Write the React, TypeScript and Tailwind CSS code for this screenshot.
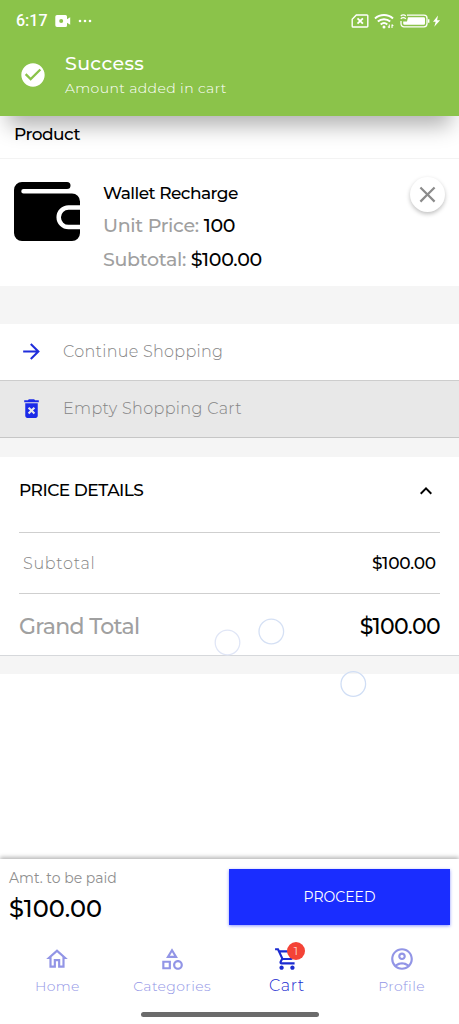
import React from 'react';
import {
  MdArrowForward,
  MdCheckCircle,
  MdClose,
  MdDeleteForever,
  MdKeyboardArrowUp,
  MdOutlineAccountCircle,
  MdOutlineCategory,
  MdOutlineHome,
  MdOutlineShoppingCart,
} from 'react-icons/md';

const tabs = [
  { icon: MdOutlineHome, label: 'Home', text: 'text-[14px] tracking-[0.3px]' },
  { icon: MdOutlineCategory, label: 'Categories', text: 'text-[14px] tracking-[0.4px]' },
  { icon: MdOutlineShoppingCart, label: 'Cart', text: 'text-[16px] tracking-[0.6px]', active: true, badge: 1 },
  { icon: MdOutlineAccountCircle, label: 'Profile', text: 'text-[14px] tracking-[0.4px]' },
];

const StatusBar: React.FC = () => (
  <div className="flex h-[42px] items-center justify-between pl-4 pr-[18px] text-white">
    <div className="flex items-center">
      <span className="font-['Roboto',sans-serif] text-[16px] font-medium leading-5">6:17</span>
      <svg className="ml-[7px]" width="16" height="12" viewBox="0 0 16 12" fill="currentColor">
        <path
          fillRule="evenodd"
          d="M2 0h8.5a1.5 1.5 0 0 1 1.5 1.5v2.7l3.2-2v7.6l-3.2-2v2.7a1.5 1.5 0 0 1-1.5 1.5H2A1.7 1.7 0 0 1 .3 10.3V1.7A1.7 1.7 0 0 1 2 0Zm4.2 4a2 2 0 1 0 0 4 2 2 0 0 0 0-4Z"
        />
      </svg>
      <svg className="ml-[7px]" width="14" height="4" viewBox="0 0 14 4" fill="currentColor">
        <circle cx="2" cy="2" r="1.3" />
        <circle cx="7" cy="2" r="1.3" />
        <circle cx="12" cy="2" r="1.3" />
      </svg>
    </div>
    <div className="flex items-center">
      <svg width="18" height="14" viewBox="0 0 18 14" fill="none" stroke="currentColor">
        <path d="M5.3 1H16a.8.8 0 0 1 .8.8v10.4a.8.8 0 0 1-.8.8H2a.8.8 0 0 1-.8-.8V5.2Z" strokeWidth="1.4" />
        <path d="m6.5 4.3 5.4 5.4m0-5.4-5.4 5.4" strokeWidth="1.8" />
      </svg>
      <svg className="ml-[5px]" width="21" height="16" viewBox="0 0 21 16" fill="none" stroke="currentColor">
        <path d="M1 5.500a13.400 13.400 0 0 1 18 0M3.800 8.600a9.200 9.200 0 0 1 12.400 0M6.700 11.400a5 5 0 0 1 6.600 0" strokeWidth="2" />
        <circle cx="10" cy="13.900" r="1.500" fill="currentColor" stroke="none" />
        <path d="M15.300 15v-3.500m-1.300 2 1.300 1.500M18 11.500V15m1.300-2L18 11.500" strokeWidth="1.100" />
      </svg>
      <svg className="ml-[5px]" width="41" height="16" viewBox="0 0 41 16" fill="none" stroke="currentColor">
        <path d="M7 2.200h17a3 3 0 0 1 3 3v5.600a3 3 0 0 1-3 3H4a3 3 0 0 1-3-3V8" strokeWidth="1.300" />
        <path d="M.8 3a3.400 3.400 0 0 1 5 0M.8 5.800a3.400 3.400 0 0 1 5 0" strokeWidth="1.200" />
        <path d="M8 4.300h15.700a1.300 1.300 0 0 1 1.300 1.300v4.800a1.300 1.300 0 0 1-1.300 1.300H4.500A1.300 1.300 0 0 1 3.200 10.400V8.500H7Z" fill="currentColor" stroke="none" />
        <path d="M28.700 6.200v3.600" strokeWidth="1.400" />
        <path d="m38 2.500-5 6.200h2.700L34.300 13.800l5.800-6.500h-3Z" fill="currentColor" stroke="none" />
      </svg>
    </div>
  </div>
);

const Toast: React.FC = () => (
  <header className="relative h-[116px] bg-[#8bc34a] text-white shadow-[0_18px_20px_-8px_rgba(0,0,0,0.3)]">
    <StatusBar />
    <div className="flex items-center pl-[19px] pt-2.5">
      <MdCheckCircle size={28} className="-mt-[3px]" />
      <div className="pl-[18px]">
        <p className="text-[19px] font-medium leading-6 tracking-[0.35px]">Success</p>
        <p className="text-[14px] font-light leading-6 tracking-[0.4px]">Amount added in cart</p>
      </div>
    </div>
  </header>
);

const WalletIcon: React.FC = () => (
  <svg width="66" height="59" viewBox="0 0 66 59">
    <path d="M8 0h45a3.5 3.5 0 0 1 0 7H9.5a2.2 2.2 0 0 0 0 4.5H58a8 8 0 0 1 8 8V51a8 8 0 0 1-8 8H8a8 8 0 0 1-8-8V8a8 8 0 0 1 8-8Z" />
    <path d="M66 25.5H54.5a9.8 9.8 0 0 0 0 19.6H66" fill="none" stroke="#fff" strokeWidth="4.5" />
  </svg>
);

const App: React.FC = () => {
  return (
    <div className="relative flex h-[1024px] w-[459px] flex-col overflow-hidden bg-white font-['Montserrat','Inter',sans-serif] text-black">
      <Toast />

      <div className="h-[43px] border-b border-[#f3f3f3] pl-3.5 pt-1.5 text-[17px] font-medium leading-6 tracking-[-0.5px]">
        Product
      </div>

      <section className="flex h-[127px] items-start pl-3.5 pr-[14px]">
        <div className="pt-[23px]">
          <WalletIcon />
        </div>
        <div className="flex-1 pl-[23px] pt-[17px] font-medium">
          <p className="h-[33px] text-[17px] leading-[34px] tracking-[-0.53px]">Wallet Recharge</p>
          <p className="h-[34px] text-[19px] leading-[34px] tracking-[-0.3px] text-[#a0a0a0]">
            Unit Price: <span className="text-black">100</span>
          </p>
          <p className="h-[34px] text-[19px] leading-[34px] tracking-[-0.3px] text-[#a0a0a0]">
            Subtotal: <span className="text-black">$100.00</span>
          </p>
        </div>
        <button className="mt-[18px] flex size-[35px] items-center justify-center rounded-full bg-white text-[#8b8b8b] shadow-[0_2px_4px_rgba(0,0,0,0.25)]">
          <MdClose size={27} />
        </button>
      </section>

      <div className="h-[38px] bg-[#f5f5f5]" />

      <nav className="text-[16px] font-light text-[#858585]">
        <a className="flex h-[57px] items-center border-b border-[#cdcdcd] pb-px pl-[19px]">
          <MdArrowForward size={25} className="text-[#1f2ddb]" />
          <span className="pl-[19px] tracking-[0.3px]">Continue Shopping</span>
        </a>
        <a className="flex h-[57px] items-center border-b border-[#c6c6c6] bg-[#e8e8e8] pb-px pl-[19px]">
          <MdDeleteForever size={25} className="text-[#1c2be8]" />
          <span className="pl-[19px] tracking-[0.35px]">Empty Shopping Cart</span>
        </a>
      </nav>

      <div className="h-[19px] bg-[#f5f5f5]" />

      <section className="h-[199px] border-b border-[#d6d8db] px-[19px]">
        <div className="flex h-[76px] items-center justify-between border-b border-[#cfcfcf] pb-[7px] pr-0.5">
          <h2 className="text-[17px] font-medium tracking-[-0.5px]">PRICE DETAILS</h2>
          <MdKeyboardArrowUp size={24} />
        </div>
        <div className="flex h-[61px] items-center justify-between border-b border-[#cfcfcf] px-1 pt-0.5">
          <span className="text-[16px] font-light tracking-[0.7px] text-[#858585]">Subtotal</span>
          <span className="text-[17px] font-medium tracking-[-0.2px]">$100.00</span>
        </div>
        <div className="flex h-[61px] items-center justify-between pt-1 text-[22px] font-medium">
          <span className="tracking-[-0.65px] text-[#a0a0a0]">Grand Total</span>
          <span className="tracking-[-0.65px]">$100.00</span>
        </div>
      </section>

      <div className="h-[18px] bg-[#f5f5f5]" />
      <div className="flex-1" />

      <footer className="h-[165px] bg-white shadow-[0_-2px_4px_rgba(0,0,0,0.28)]">
        <div className="flex h-[75px] items-start justify-between pl-[9px] pr-[9px] pt-2.5">
          <div>
            <p className="text-[14px] leading-[18px] text-[#8f8f8f]">Amt. to be paid</p>
            <p className="pt-1 text-[24px] font-medium leading-[36px] tracking-[0.1px]">$100.00</p>
          </div>
          <button className="h-[56px] w-[221px] bg-[#1a2dff] text-[14px] text-white shadow-[0_1px_3px_rgba(26,45,255,0.5)]">
            PROCEED
          </button>
        </div>
        <div className="flex h-[78px]">
          {tabs.map((tab) => (
            <a
              key={tab.label}
              className={`flex flex-1 flex-col items-center pt-[11px] font-light ${tab.active ? 'text-[#1b2bd0]' : 'text-[#9295e6]'}`}
            >
              <span className="relative flex h-[27px] items-center">
                <tab.icon size={26} />
                {tab.badge && (
                  <span className="absolute -top-[3px] left-[13px] flex size-[18px] items-center justify-center rounded-full bg-[#f44336] text-[12px] text-white">
                    {tab.badge}
                  </span>
                )}
              </span>
              <span className={`leading-[28px] ${tab.text}`}>{tab.label}</span>
            </a>
          ))}
        </div>
        <div className="mx-auto h-[5px] w-[178px] rounded-full bg-[#6b6b6b]" />
      </footer>

      {/* Floating bubbles */}
      <svg className="pointer-events-none absolute left-0 top-0" width="459" height="1024" fill="none" strokeWidth="1.3">
        <circle cx="227.5" cy="642.5" r="12.3" stroke="#e0e6f6" />
        <circle cx="271.3" cy="631.5" r="12.3" stroke="#d5e0f4" />
        <circle cx="353.3" cy="684" r="12.3" stroke="#d0def5" />
      </svg>
    </div>
  );
};

export default App;
